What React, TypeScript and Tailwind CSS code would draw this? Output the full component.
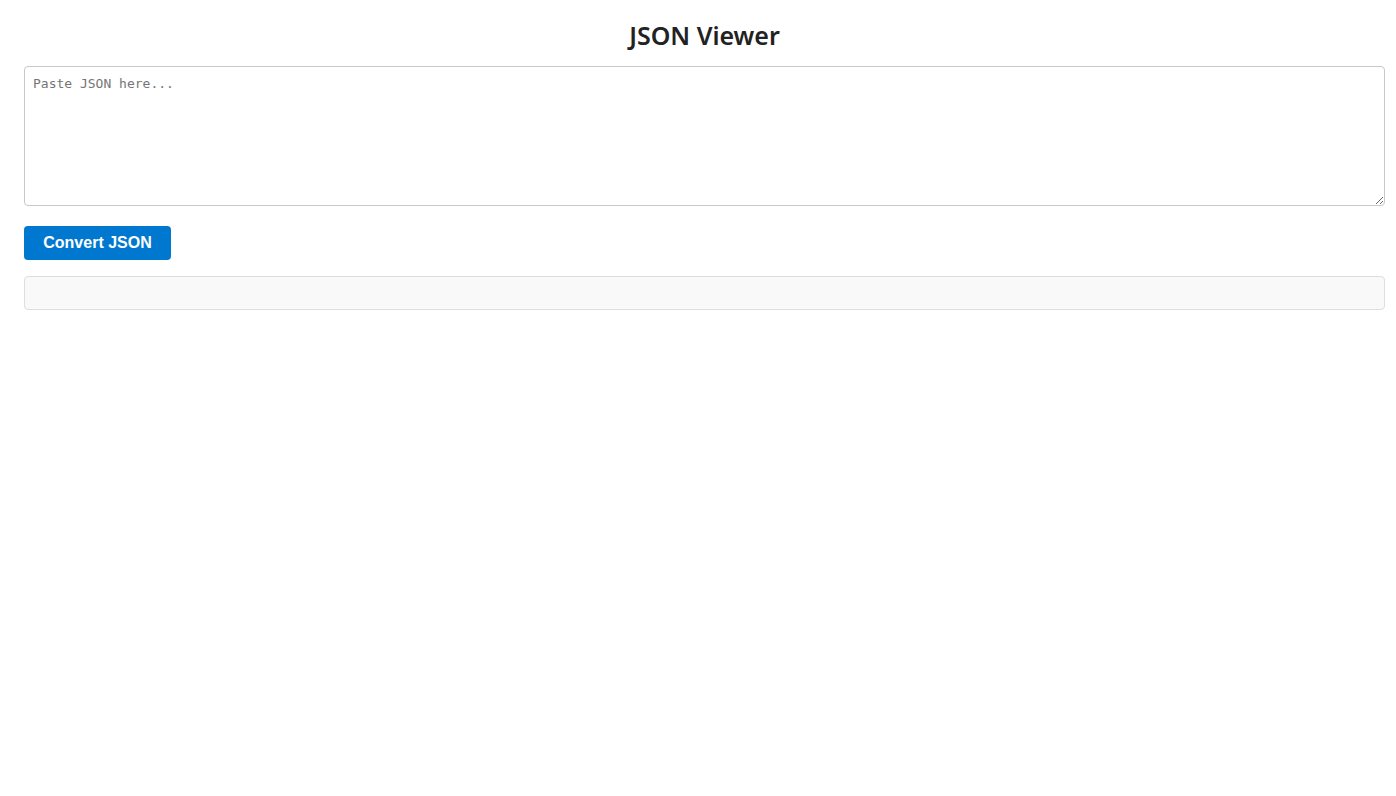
export default function App() {
  return (
    <div className="flex min-h-screen flex-col bg-white pl-[24px] pr-[11px] pt-[18px] font-['Noto_Sans','Open_Sans',sans-serif]">
      <h1 className="text-center text-[25px] leading-[34px] font-semibold text-[#222]">
        JSON Viewer
      </h1>
      <textarea
        placeholder="Paste JSON here..."
        className="mt-[14px] block h-[140px] w-full rounded-[4px] border border-[#c8c8c8] p-[8px] font-['DejaVu_Sans_Mono','Liberation_Mono',monospace] text-[13px] leading-[18px] text-[#222] outline-none placeholder:text-[#757575]"
      />
      <button className="mt-[20px] block h-[34px] w-[147px] rounded-[4px] bg-[#0078cf] font-['Liberation_Sans',Arial,sans-serif] text-[16px] font-bold text-white">
        Convert JSON
      </button>
      <div className="mt-[16px] h-[34px] w-full rounded-[4px] border border-[#dedede] bg-[#f9f9f9]" />
    </div>
  );
}
